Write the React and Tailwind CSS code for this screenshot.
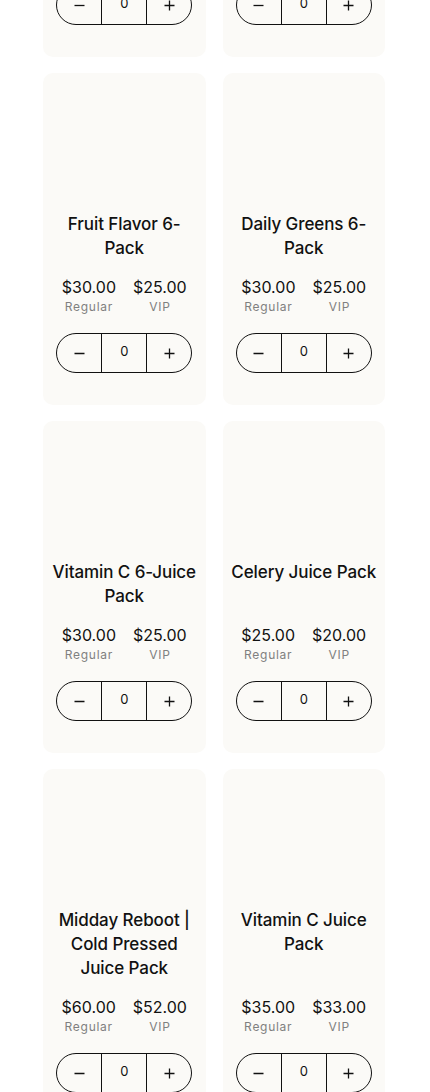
import React from "react";

// titles carry their line breaks so they wrap as in the shop
const rows = [
  [
    { name: "Green Juice 6-\nPack", regular: "$30.00", vip: "$25.00" },
    { name: "Citrus Juice 6-\nPack", regular: "$30.00", vip: "$25.00" },
  ],
  [
    { name: "Fruit Flavor 6-\nPack", regular: "$30.00", vip: "$25.00" },
    { name: "Daily Greens 6-\nPack", regular: "$30.00", vip: "$25.00" },
  ],
  [
    { name: "Vitamin C 6-Juice\nPack", regular: "$30.00", vip: "$25.00" },
    { name: "Celery Juice Pack", regular: "$25.00", vip: "$20.00" },
  ],
  [
    { name: "Midday Reboot |\nCold Pressed\nJuice Pack", regular: "$60.00", vip: "$52.00" },
    { name: "Vitamin C Juice\nPack", regular: "$35.00", vip: "$33.00" },
  ],
];

const Minus = () => (
  <svg width="11" height="11" viewBox="0 0 11 11" fill="none">
    <path d="M0.5 5.5h10" stroke="#111" strokeWidth="1.3" />
  </svg>
);

const Plus = () => (
  <svg width="11" height="11" viewBox="0 0 11 11" fill="none">
    <path d="M0.5 5.5h10M5.5 0.5v10" stroke="#111" strokeWidth="1.3" />
  </svg>
);

const Stepper = () => (
  <div className="flex h-10 w-[136px] items-stretch rounded-full border border-[#111] overflow-hidden">
    <button className="flex w-[44px] items-center justify-center">
      <Minus />
    </button>
    <div className="flex w-[46px] items-center justify-center border-x border-[#111] pb-[3px] text-[13px] text-[#111]">
      0
    </div>
    <button className="flex flex-1 items-center justify-center">
      <Plus />
    </button>
  </div>
);

const ProductCard = ({ product }) => (
  <div className="flex flex-col items-center rounded-[10px] bg-[#fbfaf7] px-1 pb-8">
    {/* image placeholder */}
    <div className="h-[139px] w-full" />
    <h3 className="whitespace-pre-line text-center text-[17px] font-medium leading-6 tracking-[-0.005em] text-[#111]">
      {product.name}
    </h3>
    <div className="mt-auto flex flex-col items-center pt-[17px]">
      <div className="flex gap-[17px]">
        <div className="flex flex-col items-center">
          <span className="text-[16px] leading-5 text-[#111]">{product.regular}</span>
          <span className="mt-[2px] text-[12px] leading-4 tracking-[0.06em] text-[#808080]">Regular</span>
        </div>
        <div className="flex flex-col items-center">
          <span className="text-[16px] leading-5 text-[#111]">{product.vip}</span>
          <span className="mt-[2px] text-[12px] leading-4 tracking-[0.06em] text-[#808080]">VIP</span>
        </div>
      </div>
      <div className="mt-[18px]">
        <Stepper />
      </div>
    </div>
  </div>
);

export default function App() {
  return (
    <div
      className="h-[1092px] overflow-hidden bg-white"
      style={{ fontFamily: "Inter, 'Noto Sans', Arial, sans-serif" }}
    >
      <div className="-mt-[275px] ml-[43px] grid w-[342px] grid-cols-2 gap-x-[17px] gap-y-4">
        {rows.flat().map((p) => (
          <ProductCard key={p.name} product={p} />
        ))}
      </div>
    </div>
  );
}
